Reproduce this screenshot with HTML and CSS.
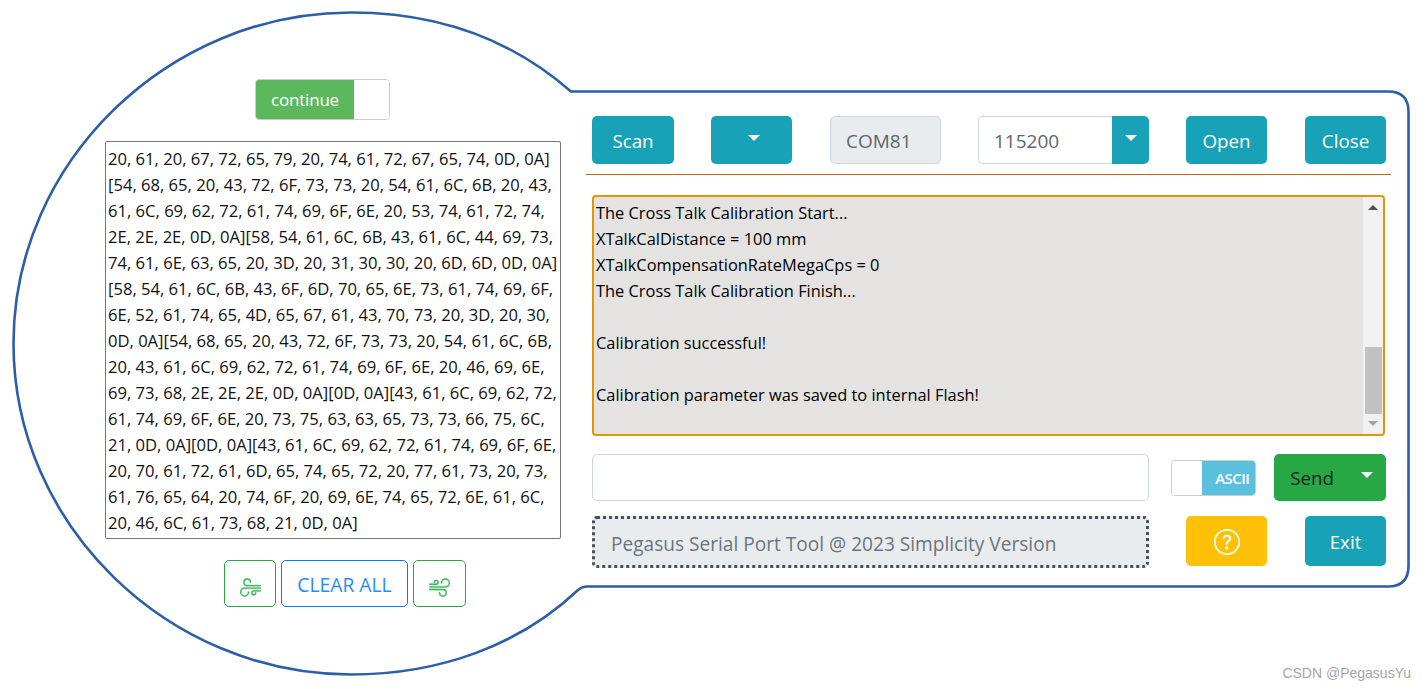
FILE: index.html
```html
<!DOCTYPE html>
<html lang="en">
<head>
<meta charset="utf-8">
<title>Pegasus Serial Port Tool</title>
<link rel="stylesheet" href="styles.css">
</head>
<body>
<div class="stage">
  <svg class="outline" width="1426" height="689" viewBox="0 0 1426 689" aria-hidden="true">
    <path d="M571 91.500 H1388 Q1408.500 91.500 1408.500 112 V566 Q1408.500 586.500 1388 586.500 H587 Q582 586.500 578 590 C520 645 440 674.500 351 674.500 C168 674.500 13.500 525 13.500 343.500 C13.500 162 168 12.500 351 12.500 C437 12.500 510 38 571 91.500 Z"/>
  </svg>

  <section class="left">
    <div class="switch">
      <span class="switch-on">continue</span>
      <span class="switch-off"></span>
    </div>
    <div class="hex">20, 61, 20, 67, 72, 65, 79, 20, 74, 61, 72, 67, 65, 74, 0D, 0A]
[54, 68, 65, 20, 43, 72, 6F, 73, 73, 20, 54, 61, 6C, 6B, 20, 43,
61, 6C, 69, 62, 72, 61, 74, 69, 6F, 6E, 20, 53, 74, 61, 72, 74,
2E, 2E, 2E, 0D, 0A][58, 54, 61, 6C, 6B, 43, 61, 6C, 44, 69, 73,
74, 61, 6E, 63, 65, 20, 3D, 20, 31, 30, 30, 20, 6D, 6D, 0D, 0A]
[58, 54, 61, 6C, 6B, 43, 6F, 6D, 70, 65, 6E, 73, 61, 74, 69, 6F,
6E, 52, 61, 74, 65, 4D, 65, 67, 61, 43, 70, 73, 20, 3D, 20, 30,
0D, 0A][54, 68, 65, 20, 43, 72, 6F, 73, 73, 20, 54, 61, 6C, 6B,
20, 43, 61, 6C, 69, 62, 72, 61, 74, 69, 6F, 6E, 20, 46, 69, 6E,
69, 73, 68, 2E, 2E, 2E, 0D, 0A][0D, 0A][43, 61, 6C, 69, 62, 72,
61, 74, 69, 6F, 6E, 20, 73, 75, 63, 63, 65, 73, 73, 66, 75, 6C,
21, 0D, 0A][0D, 0A][43, 61, 6C, 69, 62, 72, 61, 74, 69, 6F, 6E,
20, 70, 61, 72, 61, 6D, 65, 74, 65, 72, 20, 77, 61, 73, 20, 73,
61, 76, 65, 64, 20, 74, 6F, 20, 69, 6E, 74, 65, 72, 6E, 61, 6C,
20, 46, 6C, 61, 73, 68, 21, 0D, 0A]</div>
    <div class="hex-actions">
      <button class="btn-icon btn-wind">
        <svg class="wind wind-flip" viewBox="0 0 16 16" width="21" height="21"><path d="M12.5 2A2.500 2.500 0 0 0 10 4.500a.5.5 0 0 1-1 0A3.500 3.500 0 1 1 12.500 8H.5a.5.5 0 0 1 0-1h12a2.500 2.500 0 0 0 0-5zm-7 1a1 1 0 0 0-1 1 .5.5 0 0 1-1 0 2 2 0 1 1 2 2h-5a.5.5 0 0 1 0-1h5a1 1 0 0 0 0-2zM0 9.500A.5.5 0 0 1 .5 9h10.042a3 3 0 1 1-3 3 .5.5 0 0 1 1 0 2 2 0 1 0 2-2H.5a.5.5 0 0 1-.5-.5z"/></svg>
      </button>
      <button class="btn-clear">CLEAR ALL</button>
      <button class="btn-icon btn-wind btn-wind-r">
        <svg class="wind" viewBox="0 0 16 16" width="21" height="21"><path d="M12.5 2A2.500 2.500 0 0 0 10 4.500a.5.5 0 0 1-1 0A3.500 3.500 0 1 1 12.500 8H.5a.5.5 0 0 1 0-1h12a2.500 2.500 0 0 0 0-5zm-7 1a1 1 0 0 0-1 1 .5.5 0 0 1-1 0 2 2 0 1 1 2 2h-5a.5.5 0 0 1 0-1h5a1 1 0 0 0 0-2zM0 9.500A.5.5 0 0 1 .5 9h10.042a3 3 0 1 1-3 3 .5.5 0 0 1 1 0 2 2 0 1 0 2-2H.5a.5.5 0 0 1-.5-.5z"/></svg>
      </button>
    </div>
  </section>

  <section class="right">
    <div class="toolbar">
      <button class="btn btn-teal btn-scan">Scan</button>
      <button class="btn btn-teal btn-drop"><span class="caret"></span></button>
      <input class="field field-com" value="COM81" readonly>
      <div class="baud">
        <input class="field field-baud" value="115200">
        <button class="btn btn-teal btn-baud"><span class="caret"></span></button>
      </div>
      <button class="btn btn-teal btn-std">Open</button>
      <button class="btn btn-teal btn-std btn-close">Close</button>
    </div>
    <hr class="rule">
    <div class="log">
      <div class="log-text">The Cross Talk Calibration Start...
XTalkCalDistance = 100 mm
XTalkCompensationRateMegaCps = 0
The Cross Talk Calibration Finish...

Calibration successful!

Calibration parameter was saved to internal Flash!</div>
      <div class="scrollbar">
        <span class="arrow-up"></span>
        <span class="thumb"></span>
        <span class="arrow-down"></span>
      </div>
    </div>
    <div class="send-row">
      <input class="field field-send">
      <div class="switch-ascii">
        <span class="ascii-off"></span>
        <span class="ascii-on">ASCII</span>
      </div>
      <button class="btn btn-send"><span>Send</span><span class="caret"></span></button>
    </div>
    <div class="foot-row">
      <input class="field field-status" value="Pegasus Serial Port Tool @ 2023 Simplicity Version" readonly>
      <button class="btn btn-help">
        <svg viewBox="0 0 16 16" width="26" height="26"><path d="M8 15A7 7 0 1 1 8 1a7 7 0 0 1 0 14zm0 1A8 8 0 1 0 8 0a8 8 0 0 0 0 16z"/><path d="M5.255 5.786a.237.237 0 0 0 .241.247h.825c.138 0 .248-.113.266-.25.09-.656.54-1.134 1.342-1.134.686 0 1.314.343 1.314 1.168 0 .635-.374.927-.965 1.371-.673.489-1.206 1.060-1.168 1.987l.003.217a.25.25 0 0 0 .25.246h.811a.25.25 0 0 0 .25-.25v-.105c0-.718.273-.927 1.010-1.486.609-.463 1.244-.977 1.244-2.056 0-1.511-1.276-2.241-2.673-2.241-1.267 0-2.655.59-2.75 2.286zm1.557 5.763c0 .533.425.927 1.010.927.609 0 1.028-.394 1.028-.927 0-.552-.42-.94-1.029-.94-.584 0-1.009.388-1.009.94z"/></svg>
      </button>
      <button class="btn btn-teal btn-exit">Exit</button>
    </div>
  </section>

  <div class="watermark">CSDN @PegasusYu</div>
</div>
</body>
</html>
```
FILE: styles.css
```css
* { box-sizing: border-box; }
html, body { margin: 0; padding: 0; background: #fff; }
body { font-family: "Open Sans", "Noto Sans", sans-serif; color: #212529; overflow: hidden; }

.stage {
  position: relative;
  width: 1426px;
  height: 689px;
  display: flex;
  gap: 25px;
  padding-left: 105px;
  overflow: hidden;
}
.outline { position: absolute; left: 0; top: 0; }
.outline path { fill: #fff; stroke: #2b5fa8; stroke-width: 2.6; }

.left, .right { position: relative; display: flex; flex-direction: column; }

/* left column */
.left { width: 456px; padding-top: 79px; }
.switch {
  width: 135px; height: 41px; display: flex; margin-left: 150px;
  border: 1px solid #ccc; border-radius: 4px; overflow: hidden;
}
.switch-on {
  width: 98px; background: #5cb85c; color: #fff;
  font-size: 17px; letter-spacing: -0.2px;
  display: flex; align-items: center; justify-content: center;
}
.switch-off { flex: 1; background: #fff; }

.hex {
  width: 456px; height: 398px; margin-top: 21px;
  padding: 4px 2px;
  border: 1px solid #767676; border-radius: 2px; background: #fff;
  font-size: 16.6px; line-height: 26px; color: #111; white-space: pre; overflow: hidden;
}
.hex-actions { display: flex; gap: 5px; margin: 21px 0 0 119px; }
.btn-icon, .btn-clear {
  height: 47px; background: #fff; border-radius: 5px; padding: 0;
  font-family: inherit; display: flex; align-items: center; justify-content: center;
}
.btn-wind { width: 52px; border: 1px solid #28a745; }
.btn-wind-r { width: 53px; }
.wind { fill: #3fb65c; stroke: #3fb65c; stroke-width: 0.2; margin-top: 8px; }
.wind-flip { transform: rotate(180deg); }
.btn-clear { width: 127px; border: 1px solid #007bff; color: #2a8bf5; font-size: 19.3px; padding-top: 1px; }

/* right column */
.right { width: 805px; padding: 116px 5px 0 6px; }
.toolbar { display: flex; gap: 37px; align-items: stretch; height: 48px; }
.btn {
  border: 0; border-radius: 5px; padding: 1px 0 0; font-family: inherit; font-size: 18.8px;
  display: flex; align-items: center; justify-content: center; color: #fff;
}
.btn-teal { background: #17a2b8; }
.btn-scan { width: 82px; }
.btn-drop { padding-left: 5px; }
.btn-drop, .btn-std { width: 81px; }
.btn-close { margin-left: 1px; }
.caret {
  width: 0; height: 0; margin-top: -5px;
  border-left: 6px solid transparent; border-right: 6px solid transparent; border-top: 6px solid #fff;
}
.field {
  height: 100%; border: 1px solid #ced4da; border-radius: 5px; background: #fff;
  font-family: inherit; font-size: 19px; color: #5f666d; outline: 0; padding-top: 2px;
}
.field-com { width: 111px; margin-left: 1px; background: #e9ecef; padding-left: 15px; padding-right: 5px; }
.baud { display: flex; width: 171px; }
.field-baud { width: 134px; padding-left: 15px; padding-right: 5px; border-radius: 5px 0 0 5px; border-right: 0; }
.btn-baud { width: 37px; border-radius: 0 5px 5px 0; }

.rule { width: 805px; height: 1px; margin: 10px -6px 0; border: 0; background: #c9620f; flex: none; }

.log {
  display: flex; width: 793px; height: 241px; margin-top: 20px;
  border: 2px solid #e69500; border-radius: 4px; background: #e4e3e1; overflow: hidden;
}
.log-text {
  flex: 1; padding: 3px 2px; font-size: 16.4px; line-height: 26px; color: #000; white-space: pre;
}
.scrollbar {
  width: 20px; margin-right: 0; background: #f1f1f1; display: flex; flex-direction: column; align-items: center;
  position: relative;
}
.arrow-up {
  margin-top: 8px; width: 0; height: 0;
  border-left: 5px solid transparent; border-right: 5px solid transparent; border-bottom: 5px solid #505050;
}
.thumb { width: 17px; height: 67px; margin-top: 137px; background: #c1c1c1; }
.arrow-down {
  margin-top: 7px; width: 0; height: 0;
  border-left: 5px solid transparent; border-right: 5px solid transparent; border-top: 5px solid #a3a3a3;
}

.send-row { display: flex; height: 47px; margin-top: 18px; align-items: center; }
.field-send { width: 558px; }
.switch-ascii {
  width: 85px; height: 36px; margin-left: 22px; margin-right: 1px; display: flex;
  border: 1px solid #ccc; border-radius: 4px; overflow: hidden;
}
.ascii-off { width: 30px; background: #fff; }
.ascii-on {
  flex: 1; background: #5bc0de; color: #fff; font-size: 15px; font-weight: 600; letter-spacing: -0.6px;
  display: flex; align-items: center; justify-content: flex-end; padding-right: 6px;
}
.btn-send {
  width: 112px; height: 47px; margin-left: 17px; background: #28a745; color: #10261a;
  justify-content: space-between; padding: 0 13px 0 16px;
}
.foot-row { display: flex; margin-top: 15px; align-items: flex-start; }
.field-status {
  width: 558px; height: 52px; border: 3px dotted #495057; background: #e9ecef; color: #6c757d;
  padding: 4px 16px 0; font-size: 19.1px;
}
.btn-help { width: 81px; height: 50px; margin-left: 37px; background: #ffc107; }
.btn-help svg { fill: #fff; }
.btn-exit { width: 81px; height: 50px; margin-left: 38px; }

.watermark {
  position: absolute; right: 15px; bottom: 8px;
  font-family: "Liberation Sans", Arial, sans-serif;
  font-size: 14px; color: #a6a6a6;
}
```
